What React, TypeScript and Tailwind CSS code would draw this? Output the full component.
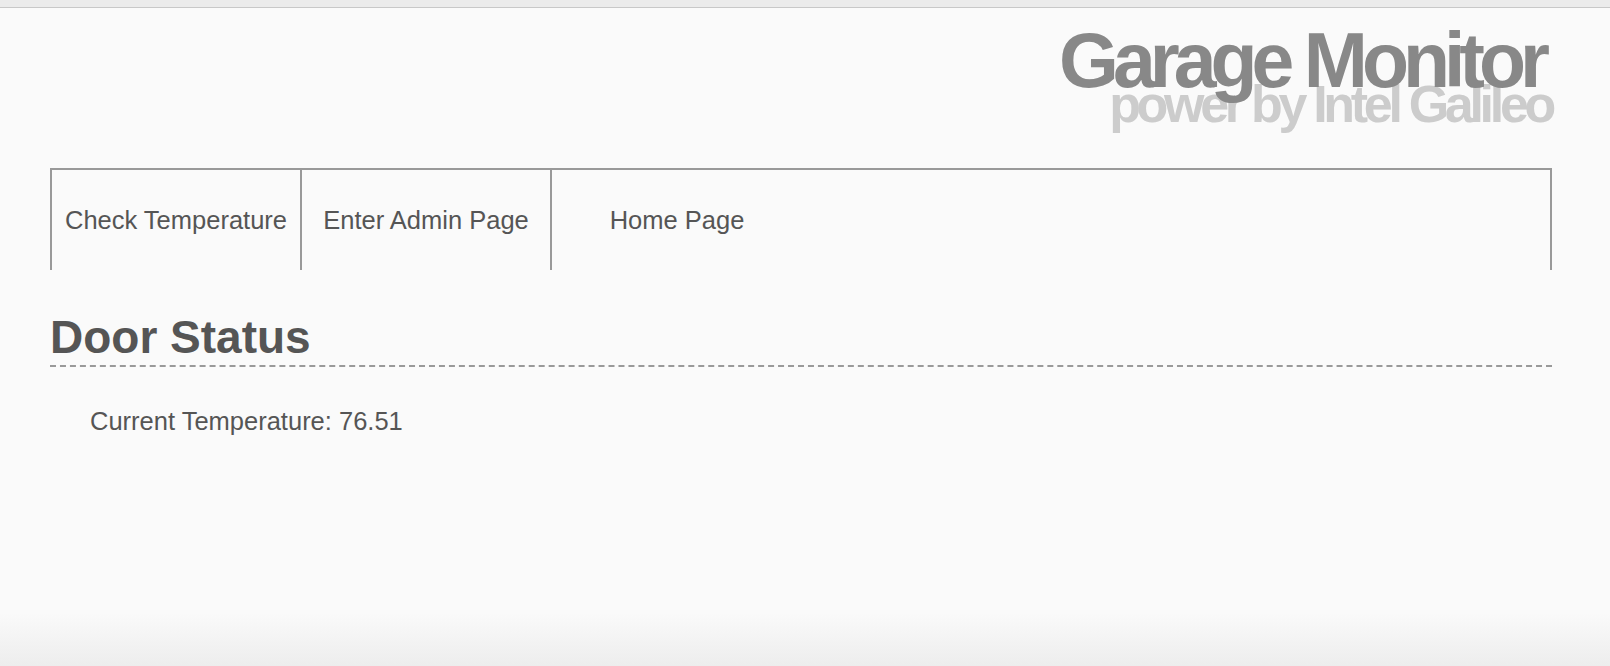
import React from 'react';

const App = () => {
  const links = ['Check Temperature', 'Enter Admin Page', 'Home Page'];

  return (
    <div className="min-h-screen bg-[linear-gradient(to_bottom,#fafafa_92%,#ededed)] font-['Liberation_Sans',Arial,sans-serif] text-[#555555]">
      {/* top strip */}
      <div className="h-[8px] bg-[#ebebeb] border-b border-[#c8c8c8]"></div>

      <div className="ml-[50px] w-[1502px]">
        {/* Header */}
        <header className="pt-[14px] text-right font-bold">
          <h1 className="relative z-10 pr-[8px] text-[77px] leading-none tracking-[-6px] text-[#888888]">
            Garage Monitor
          </h1>
          <p className="mt-[-21px] text-[52px] leading-none tracking-[-4.3px] text-[#cccccc]">
            power by Intel Galileo
          </p>
        </header>

        {/* Nav */}
        <nav className="mt-[38px] flex border-t-2 border-x-2 border-[#999999]">
          {links.map((label, i) => (
            <a
              key={label}
              href="#"
              className={`w-[250px] h-[100px] flex items-center justify-center text-[25.5px] text-[#555555] ${
                i < links.length - 1 ? 'border-r-2 border-[#999999]' : ''
              }`}
            >
              {label}
            </a>
          ))}
        </nav>

        {/* Door status */}
        <h2 className="mt-[44px] pb-[5px] text-[46px] leading-none font-bold border-b-2 border-dashed border-[#999999]">
          Door Status
        </h2>
        <p className="mt-[42px] pl-[40px] text-[25.5px] leading-none">
          Current Temperature: 76.51
        </p>
      </div>
    </div>
  );
};

export default App;
